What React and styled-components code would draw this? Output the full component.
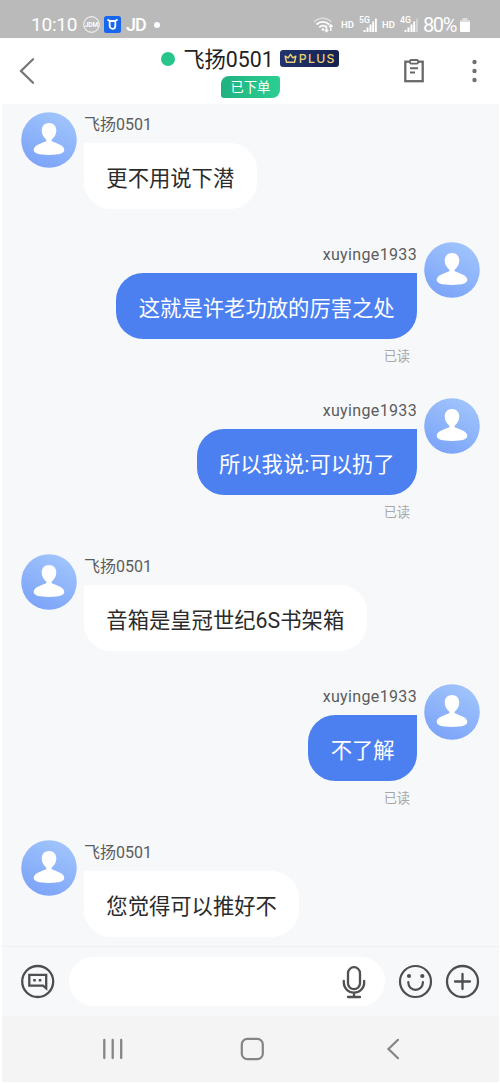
import React from 'react';
import styled, { createGlobalStyle } from 'styled-components';

const GlobalStyle = createGlobalStyle`
  * { box-sizing: border-box; }
  body {
    margin: 0;
    background: #fff;
    font-family: Roboto, "Noto Sans CJK SC", sans-serif;
  }
  svg { display: block; flex: none; }
`;

const Screen = styled.div`
  width: 500px;
  height: 1083px;
  display: flex;
  flex-direction: column;
  overflow: hidden;
  background: #fff;
`;

const StatusBar = styled.div`
  height: 38px;
  flex: none;
  display: flex;
  align-items: center;
  justify-content: space-between;
  padding: 11px 30px 0 31px;
  background: #bababa;
  color: #fff;
`;

const StatusGroup = styled.div`
  display: flex;
  align-items: center;
`;

const StatusText = styled.span`
  font-size: ${(p) => p.$size || 19}px;
  line-height: 24px;
  font-weight: ${(p) => p.$weight || 400};
  letter-spacing: ${(p) => p.$spacing || 0}px;
  width: ${(p) => p.$width}px;
  white-space: nowrap;
`;

const StatusDot = styled.span`
  width: 6px;
  height: 6px;
  border-radius: 50%;
  margin-left: 10px;
  background: #fff;
`;

const Header = styled.header`
  height: 66px;
  flex: none;
  display: flex;
  align-items: flex-start;
  justify-content: space-between;
  padding: 0 20px 0 18px;
  background: #fff;
`;

const HeaderSide = styled.div`
  width: 80px;
  height: 66px;
  display: flex;
  align-items: center;
  justify-content: ${(p) => (p.$end ? 'flex-end' : 'flex-start')};
  gap: 39px;
`;

const HeaderCenter = styled.div`
  display: flex;
  flex-direction: column;
  align-items: center;
  padding: 7px 0 0 2px;
`;

const TitleRow = styled.div`
  height: 28px;
  display: flex;
  align-items: center;
`;

const OnlineDot = styled.span`
  width: 14px;
  height: 14px;
  border-radius: 50%;
  margin: 0 8px 1px 0;
  background: #27c58c;
`;

const Title = styled.h1`
  margin: 0;
  padding-top: 2px;
  font-size: 21.3px;
  line-height: 28px;
  font-weight: 400;
  color: #222;
  white-space: nowrap;
`;

const PlusBadge = styled.span`
  width: 59px;
  height: 17px;
  margin: 0 0 2px 6px;
  display: flex;
  align-items: center;
  gap: 2px;
  padding-left: 4px;
  border-radius: 3px;
  background: linear-gradient(100deg, #21346f, #15214f);
  color: #e9cf72;
  font-family: Inter, sans-serif;
  font-size: 12.3px;
  line-height: 17px;
  font-weight: 500;
  letter-spacing: 1.3px;
`;

const OrderTag = styled.span`
  width: 59px;
  height: 22px;
  margin: 3px 0 0 1px;
  border-radius: 8px 3px 8px 3px;
  background: linear-gradient(90deg, #20b17f, #2bcf92);
  color: #fff;
  font-size: 13.3px;
  line-height: 24px;
  text-align: center;
`;

const Chat = styled.main`
  height: 842px;
  flex: none;
  display: flex;
  flex-direction: column;
  margin: 0 1px 0 2px;
  padding: 8px 19px 0;
  background: #f7f8fa;
`;

const MessageRow = styled.div`
  height: ${(p) => (p.$mine ? 156 : 130)}px;
  flex: none;
  display: flex;
  flex-direction: ${(p) => (p.$mine ? 'row-reverse' : 'row')};
  align-items: flex-start;
  gap: 7px;
`;

const MessageBody = styled.div`
  display: flex;
  flex-direction: column;
  align-items: ${(p) => (p.$mine ? 'flex-end' : 'flex-start')};
`;

const Sender = styled.div`
  height: 31px;
  font-size: 16px;
  line-height: 26px;
  letter-spacing: ${(p) => (p.$mine ? 0.35 : 0)}px;
  color: #5c5c5c;
  white-space: nowrap;
`;

const Bubble = styled.div`
  height: 66px;
  padding: 0 22.3px;
  border-radius: ${(p) => (p.$mine ? '27px 0 27px 27px' : '0 27px 27px 27px')};
  background: ${(p) => (p.$mine ? '#4c80f1' : '#fff')};
  color: ${(p) => (p.$mine ? '#fff' : '#2b2b2b')};
  font-size: 21.33px;
  line-height: 72px;
  white-space: nowrap;
`;

const ReadMark = styled.div`
  padding: 8px 7px 0 0;
  font-size: 13.2px;
  line-height: 19px;
  color: #a8a8a8;
`;

const Composer = styled.div`
  height: 70px;
  flex: none;
  display: flex;
  align-items: center;
  margin: 0 1px 0 2px;
  padding: 0 18px;
  border-top: 1px solid #eff0f2;
  background: #f7f8fa;
`;

const InputPill = styled.div`
  width: 316px;
  height: 49px;
  margin: 0 13px 0 14px;
  display: flex;
  align-items: center;
  justify-content: flex-end;
  padding: 1px 19px 0 0;
  border-radius: 25px;
  background: #fff;
`;

const PlusButton = styled.div`
  margin-left: 12px;
`;

const NavBar = styled.nav`
  height: 66px;
  flex: none;
  display: flex;
  align-items: center;
  justify-content: space-between;
  margin: 0 1px 0 2px;
  padding: 0 96px 0 99px;
  background: #f4f4f4;
`;

const Avatar = () => (
  <svg width="56" height="56" viewBox="0 0 56 56">
    <defs>
      <linearGradient id="avatarFill" x1="0.75" y1="0" x2="0.25" y2="1">
        <stop offset="0" stopColor="#a1c5fc" />
        <stop offset="1" stopColor="#7ba3f8" />
      </linearGradient>
    </defs>
    <circle cx="28" cy="28" r="27.8" fill="url(#avatarFill)" />
    <path
      fill="#fff"
      d="M28 11c-4.500 0-7.300 3.100-7.300 7.500 0 3.800 1.900 6.700 4.200 8.700.9.800.8 1.800-.2 2.300-5 2.200-12 3.700-12 8.500 0 3.200 5.100 4.900 15.300 4.900s15.300-1.700 15.300-4.900c0-4.800-7-6.300-12-8.500-1-.5-1.100-1.500-.2-2.300 2.300-2 4.200-4.900 4.200-8.700 0-4.400-2.800-7.500-7.300-7.500z"
    />
  </svg>
);

const Signal = ({ label, faded }) => (
  <svg width="19" height="18" viewBox="0 0 19 18" fill="#fff">
    <text x="0" y="6.800" fontSize="8.800" fontWeight="500" fontFamily="Roboto">{label}</text>
    <rect x="4.500" y="14" width="2" height="2" />
    <rect x="7.500" y="11.500" width="2" height="4.500" />
    <rect x="10.500" y="8.500" width="2" height="7.500" />
    <rect x="13.200" y="5.500" width="2" height="10.500" />
    <rect x="16" y="2.500" width="1.800" height="13.500" opacity={faded ? 0.4 : 1} />
  </svg>
);

const messages = [
  { name: '飞扬0501', text: '更不用说下潜' },
  { name: 'xuyinge1933', text: '这就是许老功放的厉害之处', mine: true },
  { name: 'xuyinge1933', text: '所以我说:可以扔了', mine: true },
  { name: '飞扬0501', text: '音箱是皇冠世纪6S书架箱' },
  { name: 'xuyinge1933', text: '不了解', mine: true },
  { name: '飞扬0501', text: '您觉得可以推好不' },
];

export default function App() {
  return (
    <Screen>
      <GlobalStyle />
      <StatusBar>
        <StatusGroup>
          <StatusText $width={52} $spacing={-0.2}>10:10</StatusText>
          <svg width="17" height="17" viewBox="0 0 17 17">
            <circle cx="8.500" cy="8.500" r="7.800" fill="none" stroke="#fff" strokeWidth="1" />
            <text x="8.500" y="11" fontSize="6.500" fontWeight="700" fontFamily="Roboto" fill="#fff" textAnchor="middle">JDM</text>
          </svg>
          <svg width="17" height="17" viewBox="0 0 17 17" style={{ marginLeft: 4 }}>
            <rect width="17" height="17" rx="2.500" fill="#1766ef" />
            <path d="M3.500 3.500l2.200 1.500V10a2.800 2.800 0 0 0 5.600 0V5l2.200-1.500M5.700 5h5.600" fill="none" stroke="#fff" strokeWidth="1.800" strokeLinejoin="round" />
          </svg>
          <svg width="5" height="1" />
          <StatusText $size={18} $spacing={-1} $weight={500} $width={18}>JD</StatusText>
          <StatusDot />
        </StatusGroup>
        <StatusGroup>
          <svg width="22" height="18" viewBox="0 0 22 18" fill="none" stroke="#fff">
            <path d="M1 6c5-5 12.500-5 17.500 0" strokeWidth="1.500" opacity=".5" />
            <path d="M3.500 8.500c3.700-3.500 9-3.500 12.700 0M6.300 11.300c2.200-2 5-2 7.200 0" strokeWidth="1.800" />
            <circle cx="9.900" cy="13.500" r="1.200" fill="#fff" stroke="none" />
            <path d="M13.500 9.500v6M11.800 13.800l1.700 1.900 1.700-1.900M17.800 15v-6M16 10.700l1.800-1.900 1.800 1.900" strokeWidth="1.400" />
          </svg>
          <svg width="6" height="1" />
          <StatusText $size={9.5} $weight={600} $width={18}>HD</StatusText>
          <Signal label="5G" />
          <svg width="4" height="1" />
          <StatusText $size={9.5} $weight={600} $width={18}>HD</StatusText>
          <Signal label="4G" faded />
          <svg width="4" height="1" />
          <StatusText $size={20} $spacing={-1.4} $width={37}>80%</StatusText>
          <svg width="10" height="16" viewBox="0 0 10 16" fill="#fff">
            <path d="M2.500 1h5v2H9a1 1 0 0 1 1 1v2H0V4a1 1 0 0 1 1-1h1.500z" opacity=".5" />
            <path d="M0 5h10v9a1 1 0 0 1-1 1H1a1 1 0 0 1-1-1z" />
          </svg>
        </StatusGroup>
      </StatusBar>

      <Header>
        <HeaderSide>
          <svg width="18" height="28" viewBox="0 0 18 28" fill="none" stroke="#777" strokeWidth="2.300">
            <path d="M15 2.300L3 14l12 11.700" strokeLinecap="round" />
          </svg>
        </HeaderSide>
        <HeaderCenter>
          <TitleRow>
            <OnlineDot />
            <Title>飞扬0501</Title>
            <PlusBadge>
              <svg width="13" height="11" viewBox="0 0 13 11" fill="none" stroke="#e9cf72" strokeWidth="1.500" strokeLinejoin="round">
                <path d="M2.500 9.300L1.200 3.200l3 1.600L6.500 1.300l2.300 3.500 3-1.600-1.300 6.100z" />
              </svg>
              PLUS
            </PlusBadge>
          </TitleRow>
          <OrderTag>已下单</OrderTag>
        </HeaderCenter>
        <HeaderSide $end>
          <svg width="20" height="24" viewBox="0 0 20 24" fill="none" stroke="#696969" strokeWidth="2.300">
            <rect x="1.300" y="2.700" width="17.400" height="19.500" />
            <rect x="6" y="1" width="8" height="3.600" rx="1" fill="#fff" strokeWidth="1.800" />
            <path d="M6 9.300h8M6 13.500h5" strokeWidth="1.900" />
          </svg>
          <svg width="17" height="24" viewBox="0 0 17 24" fill="#707070">
            <circle cx="11.500" cy="3" r="2.200" />
            <circle cx="11.500" cy="12" r="2.200" />
            <circle cx="11.500" cy="21" r="2.200" />
          </svg>
        </HeaderSide>
      </Header>

      <Chat>
        {messages.map((m, i) => (
          <MessageRow key={i} $mine={m.mine}>
            <Avatar />
            <MessageBody $mine={m.mine}>
              <Sender $mine={m.mine}>{m.name}</Sender>
              <Bubble $mine={m.mine}>{m.text}</Bubble>
              {m.mine && <ReadMark>已读</ReadMark>}
            </MessageBody>
          </MessageRow>
        ))}
      </Chat>

      <Composer>
        <svg width="35" height="35" viewBox="0 0 35 35" fill="none" stroke="#4e4e4e" strokeWidth="2.300">
          <circle cx="17.700" cy="17.500" r="15.500" />
          <path d="M9.300 10.800h16.900v13.500l-3.200-2.700H9.300z" />
          <path d="M14.500 15v2.600M20 15v2.600" strokeWidth="2.600" />
        </svg>
        <InputPill>
          <svg width="24" height="34" viewBox="0 0 24 34" fill="none" stroke="#505050" strokeWidth="2.300" strokeLinecap="round">
            <rect x="6" y="2.200" width="12" height="22" rx="6" />
            <path d="M1.800 16v1.500a10.200 10.200 0 0 0 20.400 0V16M12 28v4M6 32h12" />
          </svg>
        </InputPill>
        <svg width="35" height="35" viewBox="0 0 35 35" fill="none" stroke="#4e4e4e" strokeWidth="2.200">
          <circle cx="17.500" cy="17.500" r="15.500" />
          <path d="M10.300 18v.5a7.300 7.300 0 0 0 14.600 0V18" strokeLinecap="round" />
          <circle cx="11" cy="12" r="2.100" fill="#4e4e4e" stroke="none" />
          <circle cx="24.300" cy="12" r="2.100" fill="#4e4e4e" stroke="none" />
        </svg>
        <PlusButton>
          <svg width="35" height="35" viewBox="0 0 35 35" fill="none" stroke="#4e4e4e" strokeWidth="2.300">
            <circle cx="17.500" cy="17.500" r="15.500" />
            <path d="M17.500 10v15M10 17.500h15" strokeLinecap="round" />
          </svg>
        </PlusButton>
      </Composer>

      <NavBar>
        <svg width="24" height="24" viewBox="0 0 24 24" stroke="#858585" strokeWidth="2.300" strokeLinecap="round">
          <path d="M3.300 3v18M11.700 3v18M20.200 3v18" />
        </svg>
        <svg width="24" height="24" viewBox="0 0 24 24" fill="none" stroke="#858585" strokeWidth="2.200">
          <rect x="1.800" y="1.800" width="21" height="20.400" rx="5.500" />
        </svg>
        <svg width="24" height="24" viewBox="0 0 24 24" fill="none" stroke="#858585" strokeWidth="2.200" strokeLinecap="round">
          <path d="M19 2.800L9.500 12l9.500 9.200" />
        </svg>
      </NavBar>
    </Screen>
  );
}
